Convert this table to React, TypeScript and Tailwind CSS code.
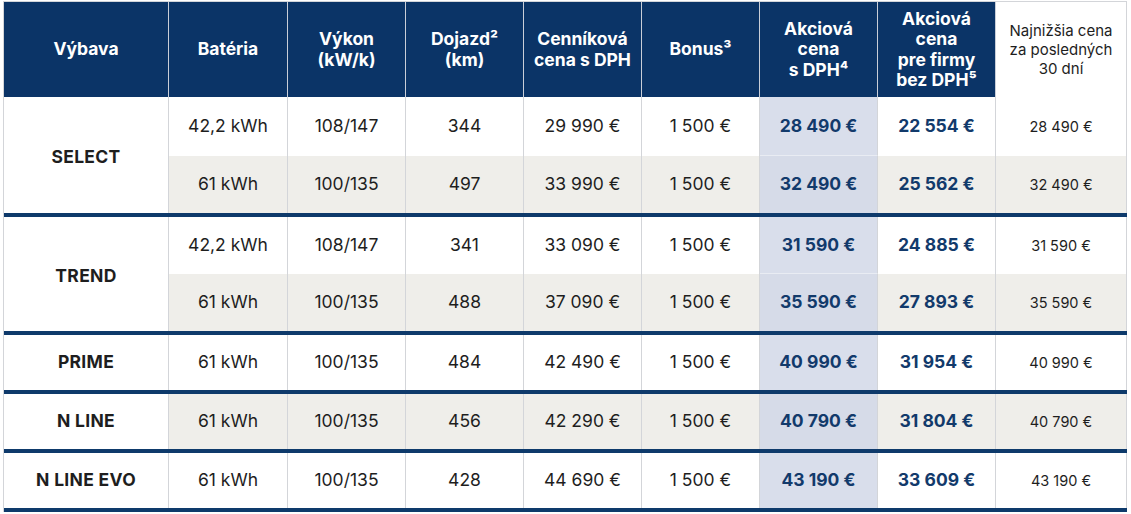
import React from "react";

const COLS = "grid grid-cols-[165px_119px_118px_118px_118px_118px_118px_118px_131px]";
const NAVY = "bg-[#0b3467]";

type Sub = { bat: string; vykon: string; dojazd: string; cena: string; bonus: string; akc: string; firmy: string; naj: string };
type Group = { name: string; rows: Sub[]; gray?: boolean };

const groups: Group[] = [
  {
    name: "SELECT",
    rows: [
      { bat: "42,2 kWh", vykon: "108/147", dojazd: "344", cena: "29 990 €", bonus: "1 500 €", akc: "28 490 €", firmy: "22 554 €", naj: "28 490 €" },
      { bat: "61 kWh", vykon: "100/135", dojazd: "497", cena: "33 990 €", bonus: "1 500 €", akc: "32 490 €", firmy: "25 562 €", naj: "32 490 €" },
    ],
  },
  {
    name: "TREND",
    rows: [
      { bat: "42,2 kWh", vykon: "108/147", dojazd: "341", cena: "33 090 €", bonus: "1 500 €", akc: "31 590 €", firmy: "24 885 €", naj: "31 590 €" },
      { bat: "61 kWh", vykon: "100/135", dojazd: "488", cena: "37 090 €", bonus: "1 500 €", akc: "35 590 €", firmy: "27 893 €", naj: "35 590 €" },
    ],
  },
  {
    name: "PRIME",
    rows: [{ bat: "61 kWh", vykon: "100/135", dojazd: "484", cena: "42 490 €", bonus: "1 500 €", akc: "40 990 €", firmy: "31 954 €", naj: "40 990 €" }],
  },
  {
    name: "N LINE",
    gray: true,
    rows: [{ bat: "61 kWh", vykon: "100/135", dojazd: "456", cena: "42 290 €", bonus: "1 500 €", akc: "40 790 €", firmy: "31 804 €", naj: "40 790 €" }],
  },
  {
    name: "N LINE EVO",
    rows: [{ bat: "61 kWh", vykon: "100/135", dojazd: "428", cena: "44 690 €", bonus: "1 500 €", akc: "43 190 €", firmy: "33 609 €", naj: "43 190 €" }],
  },
];

const cell = "flex items-center justify-center text-center border-r border-[#d3d5d9]";

function Head({ children, last }: { children: React.ReactNode; last?: boolean }) {
  return (
    <div
      className={
        cell +
        (last
          ? " bg-white text-[#1e1e1e] text-[15px] leading-[19px] font-normal"
          : " " + NAVY + " text-white text-[17.5px] leading-[20.5px] font-bold border-r-[#c9ced8]")
      }
    >
      <div>{children}</div>
    </div>
  );
}

export default function App() {
  return (
    <div className="w-[1131px] h-[514px] bg-white pl-[3px] pt-[1px]" style={{ fontFamily: "Inter, 'Open Sans', sans-serif" }}>
      <div className="w-[1124px] border-l border-t border-[#d3d5d9]">
        {/* header */}
        <div className={COLS + " h-[95px]"}>
          <Head>Výbava</Head>
          <Head>Batéria</Head>
          <Head>
            Výkon
            <br />
            (kW/k)
          </Head>
          <Head>
            Dojazd²
            <br />
            (km)
          </Head>
          <Head>
            Cenníková
            <br />
            cena s DPH
          </Head>
          <Head>Bonus³</Head>
          <Head>
            Akciová
            <br />
            cena
            <br />s DPH⁴
          </Head>
          <Head>
            Akciová
            <br />
            cena
            <br />
            pre firmy
            <br />
            bez DPH⁵
          </Head>
          <Head last>
            Najnižšia cena
            <br />
            za posledných
            <br />
            30 dní
          </Head>
        </div>

        {groups.map((g, gi) => {
          const two = g.rows.length === 2;
          const rowsClass = two
            ? gi === 0
              ? " grid-rows-[59px_57px]"
              : " grid-rows-[57px_57px]"
            : " grid-rows-[55px]";
          return (
            <React.Fragment key={g.name}>
              <div className={COLS + rowsClass}>
                <div
                  className={
                    cell +
                    " bg-white text-[17.5px] font-bold text-[#1e1e1e] tracking-[0.3px]" +
                    (two ? " row-span-2 pt-[4px]" : "")
                  }
                >
                  {g.name}
                </div>
                {g.rows.map((r, ri) => {
                  const gray = two ? ri === 1 : !!g.gray;
                  const bg = gray ? " bg-[#efeeea]" : " bg-white";
                  const hl = gray ? " bg-[#d6dbe8]" : " bg-[#d9deeb]";
                  const norm = cell + bg + " text-[17.5px] text-[#1e1e1e]";
                  const blue = " text-[17.5px] font-bold text-[#123a6b]";
                  return (
                    <React.Fragment key={ri}>
                      <div className={norm}>{r.bat}</div>
                      <div className={norm}>{r.vykon}</div>
                      <div className={norm}>{r.dojazd}</div>
                      <div className={norm}>{r.cena}</div>
                      <div className={norm}>{r.bonus}</div>
                      <div className={cell + hl + blue + (two && ri === 0 ? " border-b border-b-[#e9ecf3]" : "")}>{r.akc}</div>
                      <div className={cell + bg + blue}>{r.firmy}</div>
                      <div className={cell + bg + " text-[14.5px] text-[#1e1e1e]"}>{r.naj}</div>
                    </React.Fragment>
                  );
                })}
              </div>
              <div className="h-[4px] bg-[#0e3a6b]" />
            </React.Fragment>
          );
        })}
      </div>
    </div>
  );
}
